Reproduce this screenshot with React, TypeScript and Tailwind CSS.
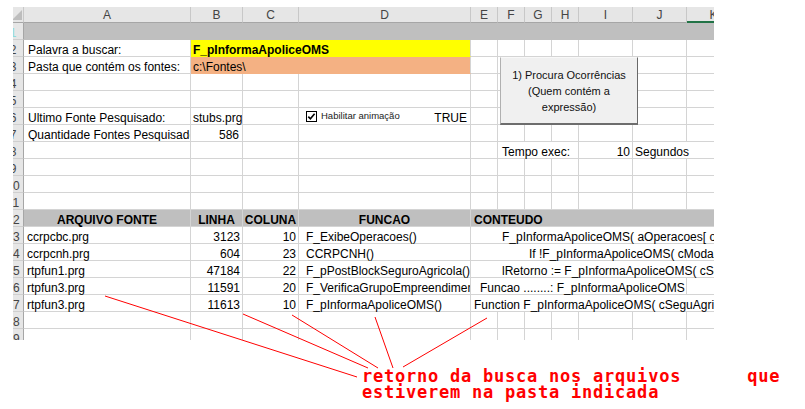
import React from "react";

const cols = [
  "w-[167px]",
  "w-[52px]",
  "w-[56px]",
  "w-[172px]",
  "w-[27px]",
  "w-[27px]",
  "w-[27px]",
  "w-[27px]",
  "w-[54px]",
  "w-[54px]",
  "w-[54px]",
];

function Cell({
  w,
  className = "",
  children,
}: {
  w: string;
  className?: string;
  children?: React.ReactNode;
}) {
  return (
    <div
      className={`${w} h-full shrink-0 overflow-x-clip whitespace-nowrap border-r border-b border-[#d4d4d4] pt-[3px] leading-[14px] ${className}`}
    >
      {children}
    </div>
  );
}

function RowHdr({ n, last = false, cyan = false }: { n: number; last?: boolean; cyan?: boolean }) {
  return (
    <div
      className={`w-[11px] h-full shrink-0 bg-[#e6e6e6] border-r border-r-[#a6a6a6] ${last ? "" : "border-b border-b-[#cfcfcf]"} overflow-hidden relative`}
    >
      <span
        className={`absolute left-[-12px] top-0 w-[24px] text-center leading-[14px] pt-[3px] ${cyan ? "text-[#8fdcdc]" : "text-[#444]"}`}
      >
        {n}
      </span>
    </div>
  );
}

function Empties({ from, last = false }: { from: number; last?: boolean }) {
  return (
    <>
      {cols.slice(from).map((w, i) => (
        <Cell key={i} w={w} className={last ? "border-b-0" : ""} />
      ))}
    </>
  );
}

function EmptyRow({ n, last = false }: { n: number; last?: boolean }) {
  return (
    <div className={`flex ${last ? "h-[11px]" : "h-[17px]"}`}>
      <RowHdr n={n} last={last} />
      <Empties from={0} last={last} />
    </div>
  );
}

type DataRow = {
  n: number;
  file: string;
  line: string;
  col: string;
  fn: string;
  content: string;
  pl: string;
  split?: boolean;
};

const data: DataRow[] = [
  {
    n: 13,
    file: "ccrpcbc.prg",
    line: "3123",
    col: "10",
    fn: "F_ExibeOperacoes()",
    content: "F_pInformaApoliceOMS( aOperacoes[ oBrw",
    pl: "pl-[31px]",
  },
  {
    n: 14,
    file: "ccrpcnh.prg",
    line: "604",
    col: "23",
    fn: "CCRPCNH()",
    content: "If !F_pInformaApoliceOMS( cModalidade",
    pl: "pl-[58px]",
  },
  {
    n: 15,
    file: "rtpfun1.prg",
    line: "47184",
    col: "22",
    fn: "F_pPostBlockSeguroAgricola()",
    content: "lRetorno := F_pInformaApoliceOMS( cSeguAgri",
    pl: "pl-[31px]",
  },
  {
    n: 16,
    file: "rtpfun3.prg",
    line: "11591",
    col: "20",
    fn: "F_VerificaGrupoEmpreendimento()",
    content: "Funcao ........: F_pInformaApoliceOMS",
    pl: "pl-[9px]",
    split: true,
  },
  {
    n: 17,
    file: "rtpfun3.prg",
    line: "11613",
    col: "10",
    fn: "F_pInformaApoliceOMS()",
    content: "Function F_pInformaApoliceOMS( cSeguAgri )",
    pl: "pl-[3px]",
  },
];

export default function App() {
  return (
    <div className="w-[805px] h-[409px] bg-white relative overflow-hidden font-['Liberation_Sans',Arial,sans-serif] text-[12px] text-black">
      <div className="pt-[7px] pl-[13px]">
        <div className="w-[701px] overflow-hidden">
          <div className="w-[728px]">
            {/* column header */}
            <div className="flex h-[16px] bg-[#e6e6e6] text-[#444]">
              <div className="w-[11px] h-full shrink-0 border-r border-b border-r-[#c8c8c8] border-b-[#a6a6a6] relative overflow-hidden">
                <svg className="absolute left-0 top-0" width="11" height="16" viewBox="0 0 11 16">
                  <polygon points="9,3 9,13 -1,13" fill="#bdbdbd" />
                </svg>
              </div>
              {["A", "B", "C", "D", "E", "F", "G", "H", "I", "J", "K"].map((l, i) => (
                <div
                  key={l}
                  className={`${cols[i]} h-full shrink-0 text-center leading-[14px] pt-[1px] border-r border-r-[#c8c8c8] ${
                    l === "K" ? "border-b-2 border-b-[#217346]" : "border-b border-b-[#a6a6a6]"
                  }`}
                >
                  {l}
                </div>
              ))}
            </div>

            {/* row 1 gray band */}
            <div className="flex h-[17px]">
              <RowHdr n={1} cyan />
              <div className="w-[717px] h-full shrink-0 bg-[#bfbfbf]" />
            </div>

            {/* row 2 */}
            <div className="flex h-[17px]">
              <RowHdr n={2} />
              <Cell w={cols[0]} className="pl-[4px]">Palavra a buscar:</Cell>
              <Cell w="w-[280px]" className="bg-[#ffff00] border-[#ffff00] border-r-[#d4d4d4] pl-[2px] font-bold">
                F_pInformaApoliceOMS
              </Cell>
              <Empties from={4} />
            </div>

            {/* row 3 */}
            <div className="flex h-[17px]">
              <RowHdr n={3} />
              <Cell w={cols[0]} className="pl-[4px]">Pasta que contém os fontes:</Cell>
              <Cell w="w-[280px]" className="bg-[#f4b183] border-[#f4b183] border-r-[#d4d4d4] pl-[2px]">
                c:\Fontes\
              </Cell>
              <Empties from={4} />
            </div>

            <EmptyRow n={4} />
            <EmptyRow n={5} />

            {/* row 6 */}
            <div className="flex h-[17px]">
              <RowHdr n={6} />
              <Cell w={cols[0]} className="pl-[4px]">Ultimo Fonte Pesquisado:</Cell>
              <Cell w={cols[1]} className="pl-[2px]">stubs.prg</Cell>
              <Cell w={cols[2]} />
              <div className="w-[172px] h-full shrink-0 border-r border-b border-[#d4d4d4] flex items-center pl-[7px] pr-[3px]">
                <svg width="11" height="11" viewBox="0 0 11 11" className="shrink-0">
                  <rect x="0.5" y="0.5" width="10" height="10" fill="white" stroke="black" />
                  <path d="M2.3 5.6 L4.4 7.8 L8.6 2.8" stroke="black" strokeWidth="1.6" fill="none" />
                </svg>
                <span className="ml-[4px] text-[9.5px] text-[#222] leading-[12px]">Habilitar animação</span>
                <span className="ml-auto pt-[3px] leading-[14px]">TRUE</span>
              </div>
              <Empties from={4} />
            </div>

            {/* row 7 */}
            <div className="flex h-[17px]">
              <RowHdr n={7} />
              <Cell w={cols[0]} className="pl-[4px] overflow-hidden">Quantidade Fontes Pesquisados:</Cell>
              <Cell w={cols[1]} className="text-right pr-[3px]">586</Cell>
              <Empties from={2} />
            </div>

            {/* row 8: Tempo exec */}
            <div className="flex h-[17px]">
              <RowHdr n={8} />
              {cols.slice(0, 5).map((w, i) => (
                <Cell key={i} w={w} />
              ))}
              <Cell w="w-[81px]" className="pl-[4px]">Tempo exec:</Cell>
              <Cell w={cols[8]} className="text-right pr-[2px]">10</Cell>
              <Cell w="w-[108px]" className="pl-[2px]">Segundos</Cell>
            </div>

            <EmptyRow n={9} />
            <EmptyRow n={10} />
            <EmptyRow n={11} />

            {/* row 12 header band */}
            <div className="flex h-[17px]">
              <RowHdr n={12} />
              <div className="flex h-full bg-[#bfbfbf] font-bold">
                <Cell w={cols[0]} className="border-0 text-center">ARQUIVO FONTE</Cell>
                <Cell w={cols[1]} className="border-0 text-center">LINHA</Cell>
                <Cell w={cols[2]} className="border-0 text-center">COLUNA</Cell>
                <Cell w={cols[3]} className="border-0 text-center">FUNCAO</Cell>
                <Cell w="w-[270px]" className="border-0 pl-[3px]">CONTEUDO</Cell>
              </div>
            </div>

            {data.map((r) => (
              <div key={r.n} className="flex h-[17px]">
                <RowHdr n={r.n} />
                <Cell w={cols[0]} className="pl-[3px]">{r.file}</Cell>
                <Cell w={cols[1]} className="text-right pr-[2px]">{r.line}</Cell>
                <Cell w={cols[2]} className="text-right pr-[2px]">{r.col}</Cell>
                <Cell w={cols[3]} className="pl-[7px]">{r.fn}</Cell>
                {r.split ? (
                  <>
                    <Cell w="w-[216px]" className={r.pl}>{r.content}</Cell>
                    <Cell w={cols[10]} />
                  </>
                ) : (
                  <Cell w="w-[270px]" className={r.pl}>{r.content}</Cell>
                )}
              </div>
            ))}

            <EmptyRow n={18} />
            <EmptyRow n={19} last />
          </div>
        </div>
      </div>

      {/* floating button */}
      <div className="absolute left-[500px] top-[57px] w-[138px] h-[68px] bg-[#f0f0f0] border border-t-[#f8f8f8] border-l-[#b0b0b0] border-r-[#696969] border-b-2 border-b-[#6d6d6d] flex items-center justify-center text-center text-[11px] leading-[16px] text-[#111] font-['Liberation_Sans',Arial,sans-serif]">
        <div>
          1) Procura Ocorrências
          <br />
          (Quem contém a
          <br />
          expressão)
        </div>
      </div>

      {/* red annotation lines */}
      <svg className="absolute left-0 top-0 pointer-events-none" width="805" height="409" viewBox="0 0 805 409">
        <g stroke="#ff0000" strokeWidth="1" fill="none">
          <line x1="105" y1="296" x2="357" y2="377" />
          <line x1="243" y1="314" x2="368" y2="368" />
          <line x1="292" y1="315" x2="378" y2="368" />
          <line x1="375" y1="317" x2="393" y2="368" />
          <line x1="487" y1="318" x2="403" y2="367" />
        </g>
      </svg>

      <div className="absolute left-[362px] top-[368px] whitespace-pre font-['DejaVu_Sans_Mono',monospace] font-bold text-[17px] tracking-[0.77px] leading-[16px] text-[#ff0000]">
        {"retorno da busca nos arquivos      que\nestiverem na pasta indicada"}
      </div>
    </div>
  );
}
